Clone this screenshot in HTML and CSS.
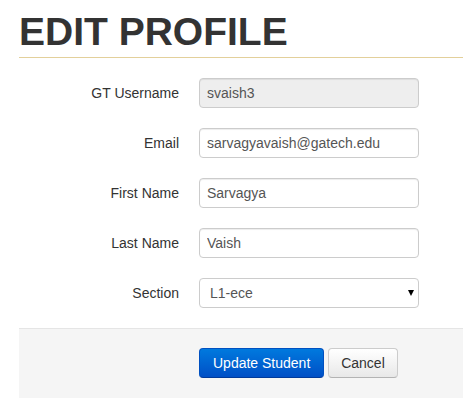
FILE: index.html
```html
<!DOCTYPE html>
<html>
<head>
<meta charset="utf-8">
<link rel="stylesheet" href="styles.css">
</head>
<body>
<div class="page">
  <h1 class="page-title">EDIT PROFILE</h1>
  <form class="profile-form">
    <div class="field">
      <label class="field-label">GT Username</label>
      <input class="field-input" type="text" value="svaish3" disabled>
    </div>
    <div class="field">
      <label class="field-label">Email</label>
      <input class="field-input" type="text" value="sarvagyavaish@gatech.edu">
    </div>
    <div class="field">
      <label class="field-label">First Name</label>
      <input class="field-input" type="text" value="Sarvagya">
    </div>
    <div class="field">
      <label class="field-label">Last Name</label>
      <input class="field-input" type="text" value="Vaish">
    </div>
    <div class="field">
      <label class="field-label">Section</label>
      <span class="select-wrap">
        <select class="field-select">
          <option>L1-ece</option>
        </select>
      </span>
    </div>
    <div class="form-actions">
      <button type="button" class="btn btn-primary">Update Student</button>
      <button type="button" class="btn btn-default">Cancel</button>
    </div>
  </form>
</div>
</body>
</html>
```

FILE: styles.css
```css
html, body {
  margin: 0;
  padding: 0;
  background: #fff;
}

body {
  font-family: "Liberation Sans", Arial, sans-serif;
  font-size: 14px;
  line-height: 20px;
  color: #333;
}

.page {
  padding-left: 19px;
}

.page-title {
  margin: 12px 0 0;
  font-size: 39px;
  line-height: 40px;
  font-weight: bold;
  color: #333;
  padding-bottom: 5px;
  border-bottom: 1px solid #e3d09b;
}

.profile-form {
  margin-top: 20px;
  display: flex;
  flex-direction: column;
  gap: 20px;
}

.field {
  display: grid;
  grid-template-columns: 160px 220px;
  column-gap: 20px;
  align-items: start;
}

.field-label {
  text-align: right;
  padding-top: 5px;
  line-height: 20px;
  color: #333;
}

.field-input,
.field-select {
  box-sizing: border-box;
  width: 220px;
  height: 30px;
  margin: 0;
  padding: 4px 7px;
  font-family: "Liberation Sans", Arial, sans-serif;
  font-size: 14px;
  line-height: 20px;
  color: #555;
  background: #fff;
  border: 1px solid #ccc;
  border-radius: 4px;
  box-shadow: inset 0 1px 1px rgba(0, 0, 0, 0.075);
  outline: none;
}

.field-input:disabled {
  background: #eee;
  color: #555;
  -webkit-text-fill-color: #555;
}

.select-wrap {
  position: relative;
  display: block;
  width: 220px;
  height: 30px;
}

.select-wrap::after {
  content: "";
  position: absolute;
  right: 5px;
  top: 12px;
  width: 0;
  height: 0;
  border-left: 3.5px solid transparent;
  border-right: 3.5px solid transparent;
  border-top: 6px solid #000;
  pointer-events: none;
}

.field-select {
  -webkit-appearance: none;
  appearance: none;
  box-shadow: none;
  padding: 4px 10px;
}

.form-actions {
  background: #f5f5f5;
  border-top: 1px solid #e5e5e5;
  padding: 19px 20px 20px 180px;
}

.btn {
  box-sizing: border-box;
  display: inline-block;
  height: 30px;
  margin: 0;
  padding: 4px 12px;
  font-family: "Liberation Sans", Arial, sans-serif;
  font-size: 14px;
  line-height: 20px;
  border-radius: 4px;
  border: 1px solid;
  vertical-align: middle;
  cursor: pointer;
}

.btn-primary {
  color: #fff;
  padding: 4px 13px;
  background: linear-gradient(to bottom, #0079de, #004fc6);
  border-color: #0050c0 #0050c0 #003a9a;
}

.btn-default {
  color: #333;
  background: linear-gradient(to bottom, #ffffff, #e8e8e8);
  border-color: #ccc #ccc #b3b3b3;
  margin-left: 0;
}
```
